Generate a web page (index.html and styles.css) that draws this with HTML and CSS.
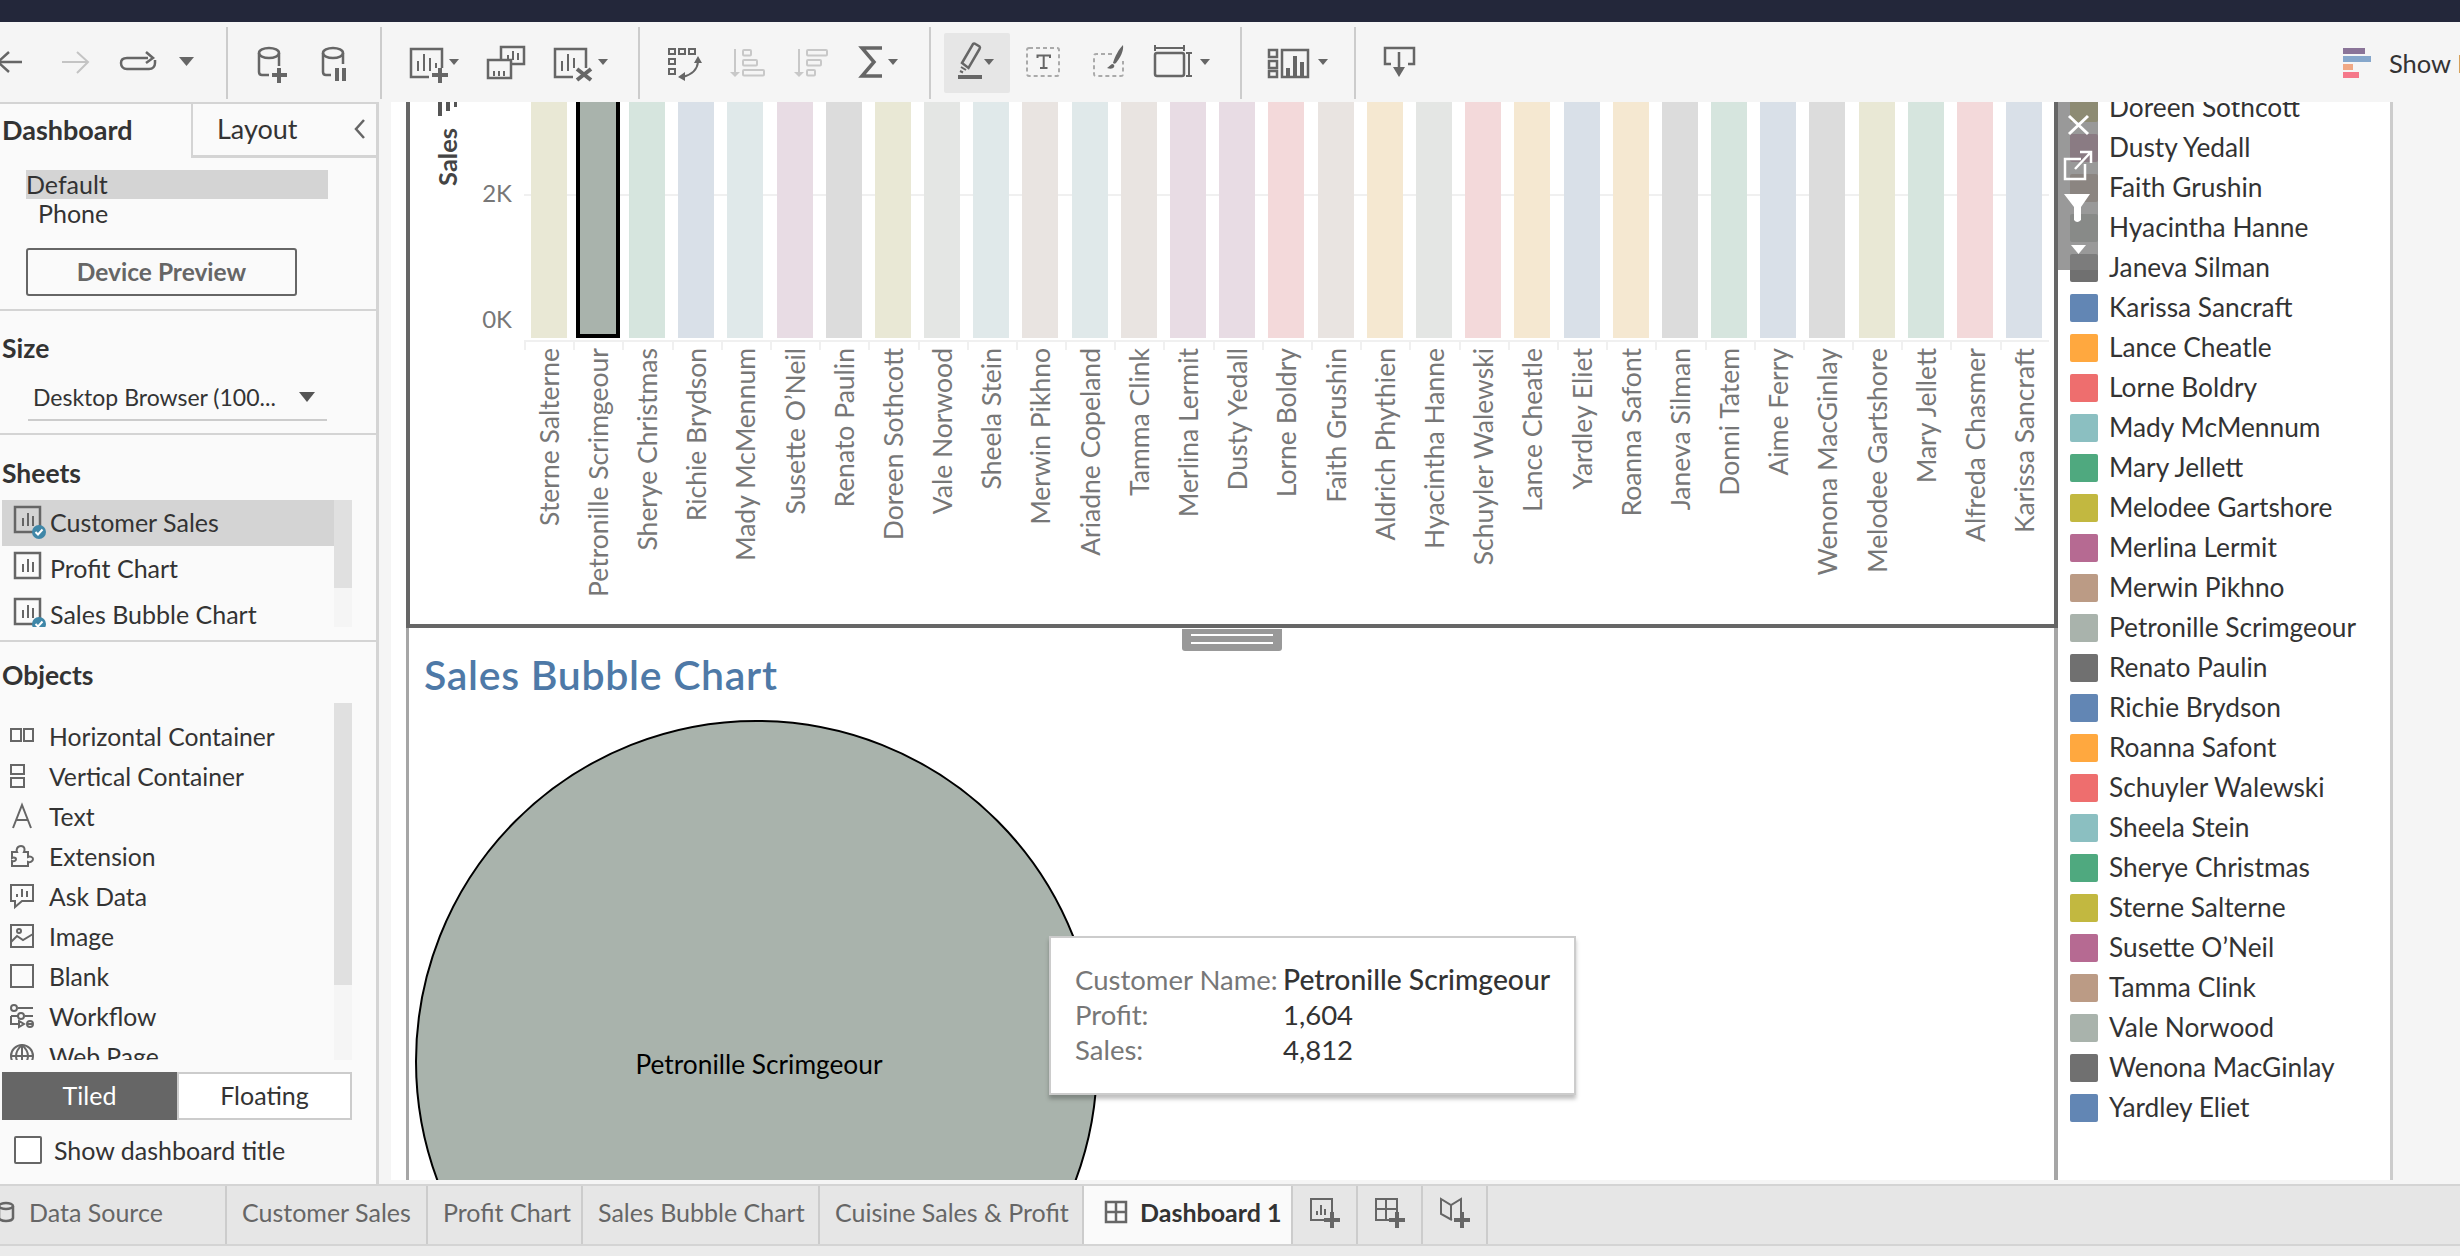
FILE: index.html
```html
<!doctype html>
<html>
<head>
  <title>Dashboard 1</title>
  <link rel="stylesheet" href="styles.css">
</head>
<body>
  <div class="titlebar"></div>

  <div class="toolbar">
    <div class="tb-group g1">
      <svg width="226" height="72" viewBox="0 27 226 72" class="ico">
        <path d="M-2 62H22M9 52L-2 62L9 72"/>
        <path class="off" d="M62 62H87M77 52L88 62L77 73"/>
        <path d="M148 58h-21c-4 0-6 2-6 5s2 6 6 6h22c4 0 6-3 6-6v-3M146 52l7 6-7 5"/>
        <path class="fill" d="M179 57h15l-7.500 9z"/>
      </svg>
    </div>
    <div class="tb-group g2">
      <svg width="152" height="72" viewBox="228 27 152 72" class="ico">
        <ellipse cx="269" cy="53" rx="10" ry="5"/>
        <path d="M259 53v19q0 3 3 3h7M279 53v13"/>
        <path class="thick" d="M279 68v15M272 75h15"/>
        <ellipse cx="333" cy="53" rx="10" ry="5"/>
        <path d="M323 53v19q0 3 3 3h5M343 53v11"/>
        <path class="thick" d="M337 68v13M344 68v13"/>
      </svg>
    </div>
    <div class="tb-group g3">
      <svg width="256" height="72" viewBox="382 27 256 72" class="ico">
        <path d="M429 77h-18V49h31v19"/>
        <path class="thin" d="M418 71V61M424 71V54M430 71V58M436 68V63"/>
        <path class="thick" d="M440 68v15M432 75h16"/>
        <path class="fill" d="M449 59h10l-5 6z"/>
        <path d="M501 60V47h23v17h-13M488 60h23v18h-23z"/>
        <path class="thin" d="M508 60v-5M513 60v-9M518 60v-7M494 76v-5M499 76v-5M504 76v-5"/>
        <path d="M573 77h-18V49h31v19"/>
        <path class="thin" d="M562 71V61M568 71V54M574 68V58"/>
        <path class="thick" d="M577 69l14 11M591 69l-14 11"/>
        <path class="fill" d="M598 59h10l-5 6z"/>
      </svg>
    </div>
    <div class="tb-group g4">
      <svg width="289" height="72" viewBox="640 27 289 72" class="ico">
        <path class="thin" d="M669 49h6v5h-6zM679 49h6v5h-6zM689 49h6v5h-6zM669 59h6v5h-6zM669 69h6v5h-6z"/>
        <path class="thin" d="M698 62q-1 11-15 15"/>
        <path class="fill" d="M698 56l4 7h-8zM678 77l7-5v9z"/>
        <g class="dim">
          <path d="M735 49v24"/>
          <path class="solid" d="M730 72h10l-5 5z"/>
          <rect x="743" y="50" width="8" height="5.500" rx="1"/>
          <rect x="743" y="60" width="14" height="5.500" rx="1"/>
          <rect x="743" y="70" width="21" height="5.500" rx="1"/>
          <path d="M799 49v24"/>
          <path class="solid" d="M794 72h10l-5 5z"/>
          <rect x="807" y="50" width="20" height="5.500" rx="1"/>
          <rect x="807" y="60" width="14" height="5.500" rx="1"/>
          <rect x="807" y="70" width="8" height="5.500" rx="1"/>
        </g>
        <path class="heavy" d="M882 48h-20l12 14-12 14h20"/>
        <path class="fill" d="M888 59h10l-5 6z"/>
      </svg>
    </div>
    <div class="tb-group g5">
      <div class="tb-active"></div>
      <svg width="309" height="72" viewBox="931 27 309 72" class="ico">
        <path d="M962 63l11-19q1-1 2.500 0l4 2.500q1 1 0 2.500l-11 19z"/>
        <path class="thin" d="M961 67l5 3M960 71l3 1.500"/>
        <path class="pen-line" d="M959 76h22v2h-22z"/>
        <path class="fill" d="M984 59h10l-5 6z"/>
        <rect class="dashed" x="1027" y="48" width="32" height="28" rx="2"/>
        <path class="thin" d="M1037.500 58v-2.500h12.500v2.500M1043.700 55.500v12.500M1040 68h7.500"/>
        <path class="dashed" d="M1112 54h-16q-2 0-2 2v18q0 2 2 2h25q2 0 2-2v-13"/>
        <path class="fill" d="M1123 45c1 6-3 13-7 18-1 1-2 1-3 0 2-7 6-14 10-18zM1112 64c2 0 3 2 2 3-1 2-4 2-7 1 2-1 3-3 5-4z"/>
        <rect x="1155" y="53" width="29" height="23" rx="2"/>
        <path class="thin" d="M1155 48h29M1155 45v6M1184 45v6M1189 53v23M1186 53h6M1186 76h6"/>
        <path class="fill" d="M1200 59h10l-5 6z"/>
      </svg>
    </div>
    <div class="tb-group g6">
      <svg width="112" height="72" viewBox="1242 27 112 72" class="ico">
        <path d="M1269 50h8v7h-8zM1269 61h8v7h-8zM1269 71h8v6h-8zM1282 50h26v27h-26z"/>
        <path class="thick" d="M1288 77V68M1295 77V56M1302 77V62"/>
        <path class="fill" d="M1318 59h10l-5 6z"/>
      </svg>
    </div>
    <div class="tb-group g7">
      <svg width="90" height="72" viewBox="1356 27 90 72" class="ico">
        <path d="M1391 64h-6V48h29v16h-6M1399 52v18"/>
        <path class="fill" d="M1393 67h12l-6 10z"/>
      </svg>
    </div>
    <div class="show-me">
      <div class="show-me-icon">
        <i class="sm a"></i><i class="sm b"></i><i class="sm c"></i><i class="sm d"></i>
      </div>
      <span>Show Me</span>
    </div>
  </div>

  <div class="main">
    <aside class="side">
      <div class="side-tabs">
        <div class="side-tab on">Dashboard</div>
        <div class="side-tab">Layout
          <svg width="12" height="22" viewBox="0 0 12 22" class="ico"><path d="M10 2L2 11l8 9"/></svg>
        </div>
      </div>

      <section class="device">
        <div class="device-row picked">Default</div>
        <div class="device-row phone">Phone</div>
        <div class="device-btn">Device Preview</div>
      </section>

      <section class="size">
        <h3>Size</h3>
        <div class="size-select">
          <span>Desktop Browser (100...</span>
          <svg width="16" height="10" viewBox="0 0 16 10"><path d="M0 0h16l-8 10z" fill="#555"/></svg>
        </div>
      </section>

      <section class="sheets">
        <h3>Sheets</h3>
        <div class="scroll-list sheet-list">
          <div class="rows">
            <div class="sheet-row picked">
              <svg width="30" height="32" viewBox="0 0 30 32" class="ico">
                <path d="M1 1h25v25H1z"/><path class="thin" d="M9 20v-8M14 20V7M19 20v-10"/>
                <circle class="badge" cx="25" cy="26" r="7"/><path class="tick" d="M21.500 26l2.500 2.500 4.500-5"/>
              </svg>
              Customer Sales
            </div>
            <div class="sheet-row">
              <svg width="30" height="32" viewBox="0 0 30 32" class="ico">
                <path d="M1 1h25v25H1z"/><path class="thin" d="M9 20v-8M14 20V7M19 20v-10"/>
              </svg>
              Profit Chart
            </div>
            <div class="sheet-row">
              <svg width="30" height="32" viewBox="0 0 30 32" class="ico">
                <path d="M1 1h25v25H1z"/><path class="thin" d="M9 20v-8M14 20V7M19 20v-10"/>
                <circle class="badge" cx="25" cy="26" r="7"/><path class="tick" d="M21.500 26l2.500 2.500 4.500-5"/>
              </svg>
              Sales Bubble Chart
            </div>
          </div>
          <div class="scrollbar sheets-bar"><div class="thumb"></div></div>
        </div>
      </section>

      <section class="objects">
        <h3>Objects</h3>
        <div class="scroll-list object-list">
          <div class="rows">
            <div class="obj-row">
              <svg width="24" height="24" viewBox="0 0 24 24" class="ico"><path class="thin" d="M1 5h10v12H1zM14 5h9v12h-9z"/></svg>
              Horizontal Container
            </div>
            <div class="obj-row">
              <svg width="24" height="24" viewBox="0 0 24 24" class="ico"><path class="thin" d="M1 1h13v9H1zM1 14h13v9H1z"/></svg>
              Vertical Container
            </div>
            <div class="obj-row">
              <svg width="24" height="24" viewBox="0 0 24 24" class="ico"><path class="thin" d="M3 24L12 1l9 23M6 16h12"/></svg>
              Text
            </div>
            <div class="obj-row">
              <svg width="24" height="24" viewBox="0 0 24 24" class="ico"><path class="thin" d="M2 8h5c-1-2 0-6 4-6s4 4 3 6h4v5c2-1 5 0 5 2s-3 4-5 3v4H2v-5c3 1 4-1 4-2s-2-2-4-1z"/></svg>
              Extension
            </div>
            <div class="obj-row">
              <svg width="24" height="24" viewBox="0 0 24 24" class="ico"><path class="thin" d="M1 1h22v16H12l-7 6v-6H1zM7 13v-3M12 13V5M17 13V7"/></svg>
              Ask Data
            </div>
            <div class="obj-row">
              <svg width="24" height="24" viewBox="0 0 24 24" class="ico"><path class="thin" d="M1 1h22v22H1zM1 18l6-6 6 4 10-6"/><circle class="thin" cx="9" cy="7" r="2"/></svg>
              Image
            </div>
            <div class="obj-row">
              <svg width="24" height="24" viewBox="0 0 24 24" class="ico"><path class="thin" d="M1 1h22v22H1z"/></svg>
              Blank
            </div>
            <div class="obj-row">
              <svg width="24" height="24" viewBox="0 0 24 24" class="ico"><path class="thin" d="M8 4h15M1 12h7M15 12h8M1 12v8h8M9 17v6l5-3zM18 20h5"/><circle class="thin" cx="4" cy="4" r="3"/><circle class="thin" cx="11" cy="12" r="3"/><circle class="thin" cx="20" cy="20" r="3"/></svg>
              Workflow
            </div>
            <div class="obj-row">
              <svg width="24" height="24" viewBox="0 0 24 24" class="ico"><circle class="thin" cx="12" cy="12" r="11"/><path class="thin" d="M1 12h22M12 1v22M12 1c-8 7-8 15 0 22M12 1c8 7 8 15 0 22"/></svg>
              Web Page
            </div>
          </div>
          <div class="scrollbar objects-bar"><div class="thumb"></div></div>
        </div>
        <div class="mode">
          <div class="mode-btn on">Tiled</div>
          <div class="mode-btn">Floating</div>
        </div>
        <label class="show-title"><span class="check"></span>Show dashboard title</label>
      </section>
    </aside>

    <div class="dashboard">
      <div class="sheet-stack">
        <div class="top-sheet">
          <div class="yaxis">
            <div class="axis-title">
              <span class="axis-name">Sales</span>
              <svg width="22" height="14" viewBox="0 0 22 14" class="axis-sort"><path d="M2 0h4v14H2zM10 0h4v9h-4zM18 0h3v5h-3z" fill="#555"/></svg>
            </div>
            <div class="ticks"><span>2K</span><span>0K</span></div>
          </div>
          <div class="cols">
            <div class="col t-olive"><div class="bar"></div><div class="lab">Sterne Salterne</div></div>
            <div class="col t-sage"><div class="bar sel"></div><div class="lab">Petronille Scrimgeour</div></div>
            <div class="col t-green"><div class="bar"></div><div class="lab">Sherye Christmas</div></div>
            <div class="col t-blue"><div class="bar"></div><div class="lab">Richie Brydson</div></div>
            <div class="col t-teal"><div class="bar"></div><div class="lab">Mady McMennum</div></div>
            <div class="col t-plum"><div class="bar"></div><div class="lab">Susette O’Neil</div></div>
            <div class="col t-gray"><div class="bar"></div><div class="lab">Renato Paulin</div></div>
            <div class="col t-olive"><div class="bar"></div><div class="lab">Doreen Sothcott</div></div>
            <div class="col t-mist"><div class="bar"></div><div class="lab">Vale Norwood</div></div>
            <div class="col t-teal"><div class="bar"></div><div class="lab">Sheela Stein</div></div>
            <div class="col t-brown"><div class="bar"></div><div class="lab">Merwin Pikhno</div></div>
            <div class="col t-teal"><div class="bar"></div><div class="lab">Ariadne Copeland</div></div>
            <div class="col t-brown"><div class="bar"></div><div class="lab">Tamma Clink</div></div>
            <div class="col t-plum"><div class="bar"></div><div class="lab">Merlina Lermit</div></div>
            <div class="col t-plum"><div class="bar"></div><div class="lab">Dusty Yedall</div></div>
            <div class="col t-red"><div class="bar"></div><div class="lab">Lorne Boldry</div></div>
            <div class="col t-brown"><div class="bar"></div><div class="lab">Faith Grushin</div></div>
            <div class="col t-orange"><div class="bar"></div><div class="lab">Aldrich Phythien</div></div>
            <div class="col t-mist"><div class="bar"></div><div class="lab">Hyacintha Hanne</div></div>
            <div class="col t-red"><div class="bar"></div><div class="lab">Schuyler Walewski</div></div>
            <div class="col t-orange"><div class="bar"></div><div class="lab">Lance Cheatle</div></div>
            <div class="col t-blue"><div class="bar"></div><div class="lab">Yardley Eliet</div></div>
            <div class="col t-orange"><div class="bar"></div><div class="lab">Roanna Safont</div></div>
            <div class="col t-gray"><div class="bar"></div><div class="lab">Janeva Silman</div></div>
            <div class="col t-green"><div class="bar"></div><div class="lab">Donni Tatem</div></div>
            <div class="col t-blue"><div class="bar"></div><div class="lab">Aime Ferry</div></div>
            <div class="col t-gray"><div class="bar"></div><div class="lab">Wenona MacGinlay</div></div>
            <div class="col t-olive"><div class="bar"></div><div class="lab">Melodee Gartshore</div></div>
            <div class="col t-green"><div class="bar"></div><div class="lab">Mary Jellett</div></div>
            <div class="col t-red"><div class="bar"></div><div class="lab">Alfreda Chasmer</div></div>
            <div class="col t-blue"><div class="bar"></div><div class="lab">Karissa Sancraft</div></div>
          </div>
        </div>

        <div class="bottom-sheet">
          <div class="handle"></div>
          <h2 class="sheet-title">Sales Bubble Chart</h2>
          <div class="bubble"><span>Petronille Scrimgeour</span></div>
          <div class="tooltip">
            <div class="tip-row"><span class="tip-key">Customer Name:</span><span class="tip-val strong">Petronille Scrimgeour</span></div>
            <div class="tip-row"><span class="tip-key">Profit:</span><span class="tip-val">1,604</span></div>
            <div class="tip-row"><span class="tip-key">Sales:</span><span class="tip-val">4,812</span></div>
          </div>
        </div>
      </div>

      <div class="legend">
        <div class="legend-list">
          <div class="key k-olive"><i></i>Doreen Sothcott</div>
          <div class="key k-plum"><i></i>Dusty Yedall</div>
          <div class="key k-brown"><i></i>Faith Grushin</div>
          <div class="key k-sage"><i></i>Hyacintha Hanne</div>
          <div class="key k-gray"><i></i>Janeva Silman</div>
          <div class="key k-blue"><i></i>Karissa Sancraft</div>
          <div class="key k-orange"><i></i>Lance Cheatle</div>
          <div class="key k-red"><i></i>Lorne Boldry</div>
          <div class="key k-teal"><i></i>Mady McMennum</div>
          <div class="key k-green"><i></i>Mary Jellett</div>
          <div class="key k-olive"><i></i>Melodee Gartshore</div>
          <div class="key k-plum"><i></i>Merlina Lermit</div>
          <div class="key k-brown"><i></i>Merwin Pikhno</div>
          <div class="key k-sage"><i></i>Petronille Scrimgeour</div>
          <div class="key k-gray"><i></i>Renato Paulin</div>
          <div class="key k-blue"><i></i>Richie Brydson</div>
          <div class="key k-orange"><i></i>Roanna Safont</div>
          <div class="key k-red"><i></i>Schuyler Walewski</div>
          <div class="key k-teal"><i></i>Sheela Stein</div>
          <div class="key k-green"><i></i>Sherye Christmas</div>
          <div class="key k-olive"><i></i>Sterne Salterne</div>
          <div class="key k-plum"><i></i>Susette O’Neil</div>
          <div class="key k-brown"><i></i>Tamma Clink</div>
          <div class="key k-sage"><i></i>Vale Norwood</div>
          <div class="key k-gray"><i></i>Wenona MacGinlay</div>
          <div class="key k-blue"><i></i>Yardley Eliet</div>
        </div>
        <div class="float-tools">
          <svg width="40" height="168" viewBox="0 0 40 168">
            <path d="M11 14l19 18M30 14L11 32" stroke="#fff" stroke-width="3" fill="none"/>
            <path d="M23 57H7v20h20V62M17 67l15-16M22 50h11v11" stroke="#fff" stroke-width="2.500" fill="none"/>
            <path d="M6 92h26L23 105v13q-4 4-7 0v-13z" fill="#fff"/>
            <path d="M13 143h15l-7.500 9z" fill="#fff"/>
          </svg>
        </div>
      </div>
    </div>
  </div>

  <div class="tabs">
    <div class="tab w-source">
      <svg width="16" height="20" viewBox="0 0 16 20" class="ico"><ellipse cx="6" cy="4" rx="7" ry="3"/><path d="M-1 4v12q1 3 7 3t7-3V4"/></svg>
      Data Source
    </div>
    <div class="tab w-cust">Customer Sales</div>
    <div class="tab w-profit">Profit Chart</div>
    <div class="tab w-bubble">Sales Bubble Chart</div>
    <div class="tab w-cuisine">Cuisine Sales &amp; Profit</div>
    <div class="tab w-dash on">
      <svg width="22" height="22" viewBox="0 0 22 22" class="ico"><path d="M1 1h20v20H1zM11 1v20M1 11h20"/></svg>
      Dashboard 1
    </div>
    <div class="tab w-icon">
      <svg width="30" height="30" viewBox="0 0 30 30" class="ico"><path class="thin" d="M14 22H1V1h21v13"/><path class="thin" d="M7 17v-4M11 17V7M15 17v-6"/><path class="thick" d="M22 14v16M14 22h16"/></svg>
    </div>
    <div class="tab w-icon">
      <svg width="30" height="30" viewBox="0 0 30 30" class="ico"><path class="thin" d="M14 22H1V1h21v13M11 1v21M1 11h21"/><path class="thick" d="M22 14v16M14 22h16"/></svg>
    </div>
    <div class="tab w-icon">
      <svg width="30" height="30" viewBox="0 0 30 30" class="ico"><path class="thin" d="M12 22L1 16V1l10 6 10-6v13M11 7v15"/><path class="thick" d="M22 14v16M14 22h16"/></svg>
    </div>
  </div>
  <div class="status"></div>
</body>
</html>
```

FILE: styles.css
```css
body {
  background: #f5f5f5;
  color: #333;
  font-family: Lato, 'Liberation Sans', sans-serif;
  font-size: 25px;
  height: 1256px;
  margin: 0;
  overflow: hidden;
  width: 2460px;
}

h2, h3 {
  margin: 0;
}

h3 {
  font-size: 26.500px;
  font-weight: bold;
  line-height: 30px;
}

section {
  box-sizing: border-box;
}

.titlebar {
  background: #23273a;
  height: 22px;
}

/* Toolbar */
.toolbar {
  align-items: center;
  background: #f5f5f5;
  display: flex;
  height: 80px;
}

.tb-group {
  border-right: 2px solid #ccc;
  flex: none;
  height: 72px;
  margin-top: 2px;
  position: relative;
}

.g1 { width: 226px; }
.g2 { width: 152px; }
.g3 { width: 256px; }
.g4 { width: 289px; }
.g5 { width: 309px; }
.g6 { width: 112px; }
.g7 { border: 0; width: 90px; }

.tb-group svg {
  display: block;
  position: relative;
}

.tb-active {
  background: #e6e6e6;
  border-radius: 2px;
  height: 60px;
  left: 13px;
  position: absolute;
  top: 6px;
  width: 66px;
}

.ico {
  fill: none;
  flex: none;
  overflow: visible;
  stroke: #666;
  stroke-width: 2.5;
}

.ico .off { stroke: #c4c4c4; stroke-width: 2; }
.ico .fill { fill: #666; stroke: none; }
.ico .thin { stroke-width: 2; }
.ico .thick { stroke-width: 4; }
.ico .heavy { stroke-width: 3.5; }
.ico .pen-line { fill: #666; stroke-width: 2; }
.ico .dim path,
.ico .dim rect { stroke: #c8c8c8; stroke-width: 2; }
.ico .dim .solid { fill: #c8c8c8; stroke: none; }
.ico .dashed { stroke: #aaa; stroke-dasharray: 4 3; stroke-width: 2; }
.ico .badge { fill: #3f87a8; stroke: none; }
.ico .tick { stroke: #fff; stroke-width: 2; }

.show-me {
  align-items: center;
  display: flex;
  flex: none;
  font-size: 25.500px;
  gap: 18px;
  margin-left: 897px;
  margin-top: 2px;
}

.show-me-icon {
  display: flex;
  flex-direction: column;
  gap: 2px;
}

.sm {
  display: block;
  height: 6px;
}

.sm.a { background: #8a7498; width: 22px; }
.sm.b { background: #86a7cb; width: 28px; }
.sm.c { background: #f0a884; width: 10px; }
.sm.d { background: #f5788a; width: 16px; }

/* Layout */
.main {
  display: flex;
  height: 1082px;
}

/* Left pane */
.side {
  background: #fafafa;
  border-right: 3px solid #d4d4d4;
  border-top: 2px solid #d4d4d4;
  box-sizing: border-box;
  display: flex;
  flex: none;
  flex-direction: column;
  height: 1082px;
  width: 379px;
}

.side-tabs {
  display: flex;
  flex: none;
  font-size: 27px;
  height: 54px;
}

.side-tab {
  align-items: center;
  border-bottom: 3px solid #d4d4d4;
  border-left: 2px solid #d4d4d4;
  box-sizing: border-box;
  display: flex;
  flex: 1;
  justify-content: space-between;
  padding: 0 10px 2px 24px;
}

.side-tab.on {
  border: 0;
  flex: none;
  font-weight: bold;
  padding: 0 0 4px 2px;
  width: 191px;
}

.device {
  border-bottom: 2px solid #d4d4d4;
  flex: none;
  height: 153px;
  padding: 12px 0 0 26px;
}

.device-row {
  align-items: center;
  box-sizing: border-box;
  display: flex;
  height: 29px;
  padding-bottom: 2px;
  width: 302px;
}

.device-row.picked { background: #d4d4d4; }

.device-row.phone {
  height: 30px;
  padding-left: 12px;
}

.device-btn {
  align-items: center;
  border: 2px solid #666;
  border-radius: 3px;
  box-sizing: border-box;
  color: #666;
  display: flex;
  font-size: 24.500px;
  font-weight: bold;
  height: 48px;
  justify-content: center;
  margin-top: 19px;
  padding-bottom: 2px;
  width: 271px;
}

.size {
  border-bottom: 2px solid #d4d4d4;
  flex: none;
  height: 124px;
  padding: 22px 0 0 2px;
}

.size-select {
  align-items: center;
  border-bottom: 2px solid #ccc;
  box-sizing: border-box;
  display: flex;
  font-size: 23px;
  height: 47px;
  justify-content: space-between;
  margin: 11px 0 0 26px;
  padding: 0 12px 0 5px;
  width: 299px;
}

.sheets {
  border-bottom: 2px solid #d4d4d4;
  flex: none;
  height: 207px;
}

.sheets h3,
.objects h3 {
  padding-left: 2px;
}

.sheets h3 {
  padding-top: 23px;
}

.scroll-list {
  display: flex;
  margin-left: 2px;
  overflow: hidden;
  width: 350px;
}

.sheet-list {
  height: 127px;
  margin-top: 12px;
}

.rows {
  flex: none;
  width: 332px;
}

.sheet-row {
  align-items: center;
  box-sizing: border-box;
  display: flex;
  gap: 6px;
  height: 46px;
  padding: 0 0 2px 12px;
}

.sheet-row.picked { background: #d4d4d4; }

.scrollbar {
  background: #f5f5f5;
  flex: none;
  width: 18px;
}

.thumb {
  background: #e0e0e0;
}

.sheets-bar .thumb { height: 88px; }
.objects-bar .thumb { height: 282px; }

.objects {
  flex: 1;
}

.objects h3 {
  padding-top: 18px;
}

.object-list {
  height: 357px;
  margin-top: 13px;
}

.object-list .rows {
  padding-top: 13px;
}

.obj-row {
  align-items: center;
  display: flex;
  font-size: 24.700px;
  gap: 15px;
  height: 40px;
  padding-left: 8px;
}

.mode {
  display: flex;
  height: 48px;
  margin: 12px 0 0 2px;
  width: 350px;
}

.mode-btn {
  align-items: center;
  background: #fff;
  border: 2px solid #ccc;
  box-sizing: border-box;
  display: flex;
  flex: 1;
  justify-content: center;
  padding-bottom: 2px;
}

.mode-btn.on {
  background: #666;
  border-color: #666;
  color: #fff;
}

.show-title {
  align-items: center;
  display: flex;
  gap: 12px;
  line-height: 28px;
  margin: 16px 0 0 14px;
}

.check {
  background: #fff;
  border: 2px solid #666;
  border-radius: 2px;
  box-sizing: border-box;
  height: 28px;
  width: 28px;
}

/* Dashboard */
.dashboard {
  background: #fff;
  display: flex;
  flex: none;
  height: 1078px;
  margin-left: 12px;
  padding-left: 15px;
  width: 1987px;
}

.sheet-stack {
  display: flex;
  flex: none;
  flex-direction: column;
  width: 1652px;
}

.top-sheet {
  border-bottom: 4px solid #666;
  border-left: 4px solid #666;
  border-right: 4px solid #666;
  box-sizing: border-box;
  display: flex;
  flex: none;
  height: 526px;
  overflow: hidden;
}

.yaxis {
  display: flex;
  flex: none;
  width: 114px;
}

.axis-title {
  align-items: center;
  display: flex;
  flex: none;
  flex-direction: column;
  margin-left: 25px;
  width: 24px;
}

.axis-sort { order: -1; }

.axis-name {
  color: #444;
  font-size: 25.500px;
  font-weight: bold;
  margin-top: 12px;
  transform: rotate(180deg);
  writing-mode: vertical-rl;
}

.ticks {
  align-items: flex-end;
  color: #777;
  display: flex;
  flex: 1;
  flex-direction: column;
  font-size: 24px;
  gap: 96px;
  padding: 76px 12px 0 0;
}

.ticks span {
  line-height: 30px;
}

.cols {
  background: linear-gradient(#f0f0f0, #f0f0f0) 0 92px / 100% 2px no-repeat;
  display: flex;
  flex: none;
  width: 1525.200px;
}

.col {
  align-items: center;
  background:
    linear-gradient(#f0f0f0, #f0f0f0) 0 238px / 2px 10px no-repeat,
    linear-gradient(#f0f0f0, #f0f0f0) 0 238px / 100% 2px no-repeat;
  display: flex;
  flex: none;
  flex-direction: column;
  width: 49.200px;
}

.bar {
  background: var(--tone);
  flex: none;
  height: 236px;
  width: 36px;
}

.bar.sel {
  border: 4px solid #000;
  border-top: 0;
  box-sizing: border-box;
  width: 44px;
}

.lab {
  color: #777;
  font-size: 26.500px;
  line-height: 30px;
  margin-top: 10px;
  transform: rotate(180deg);
  white-space: nowrap;
  writing-mode: vertical-rl;
}

.t-olive { --tone: #e9e8d5; }
.t-sage { --tone: #a9b3ac; }
.t-green { --tone: #d6e5de; }
.t-blue { --tone: #d9e0e8; }
.t-teal { --tone: #e0e9ea; }
.t-plum { --tone: #e8dce4; }
.t-gray { --tone: #dcdcdc; }
.t-mist { --tone: #e4e6e4; }
.t-brown { --tone: #e9e4e1; }
.t-red { --tone: #f3d9da; }
.t-orange { --tone: #f5e8d1; }

.bottom-sheet {
  border-left: 3px solid #a6a6a6;
  border-right: 4px solid #a6a6a6;
  box-sizing: border-box;
  flex: 1;
  overflow: hidden;
  position: relative;
}

.handle {
  background: #999;
  border-radius: 0 0 3px 3px;
  box-sizing: border-box;
  height: 22px;
  left: 773px;
  padding: 5px 9px 0;
  position: absolute;
  top: 1px;
  width: 100px;
}

.handle::before {
  border-bottom: 2px solid #fff;
  border-top: 2px solid #fff;
  content: '';
  display: block;
  height: 6px;
}

.sheet-title {
  color: #4e79a7;
  font-size: 41px;
  font-weight: 600;
  letter-spacing: .7px;
  line-height: 46px;
  padding: 24px 0 0 15px;
}

.bubble {
  align-items: center;
  background: #a9b3ac;
  border: 2px solid #000;
  border-radius: 50%;
  box-sizing: border-box;
  color: #000;
  display: flex;
  font-size: 26.300px;
  height: 683px;
  justify-content: center;
  left: 6px;
  padding: 4px 0 0 5px;
  position: absolute;
  top: 92px;
  width: 683px;
}

.tooltip {
  background: #fff;
  border: 2px solid #ccc;
  box-shadow: 0 4px 4px rgba(0, 0, 0, .25);
  box-sizing: border-box;
  font-size: 27.500px;
  height: 159px;
  left: 640px;
  padding: 24px 0 0 24px;
  position: absolute;
  top: 308px;
  width: 527px;
}

.tip-row {
  display: flex;
  line-height: 35px;
}

.tip-key {
  color: #777;
  width: 208px;
}

.tip-val { color: #333; }
.tip-val.strong { font-size: 28.300px; font-weight: 500; }

/* Legend */
.legend {
  border-right: 3px solid #ccc;
  box-sizing: border-box;
  flex: none;
  font-size: 26.300px;
  overflow: hidden;
  padding-left: 12px;
  position: relative;
  width: 335px;
}

.legend-list {
  margin-top: -14px;
}

.key {
  align-items: center;
  box-sizing: border-box;
  display: flex;
  gap: 11px;
  height: 40px;
  padding-bottom: 2px;
  white-space: nowrap;
}

.key i {
  background: var(--swatch);
  border-radius: 2px;
  flex: none;
  height: 28px;
  margin-top: 2px;
  width: 28px;
}

.k-blue { --swatch: #6286b4; }
.k-orange { --swatch: #ffa83f; }
.k-red { --swatch: #ee6e6e; }
.k-teal { --swatch: #8bbfc1; }
.k-green { --swatch: #4fa97f; }
.k-olive { --swatch: #c2b840; }
.k-plum { --swatch: #b66a92; }
.k-brown { --swatch: #bb9b85; }
.k-sage { --swatch: #a9b3ac; }
.k-gray { --swatch: #707070; }

.float-tools {
  background: rgba(128, 128, 128, .8);
  height: 168px;
  left: 0;
  position: absolute;
  top: 0;
  width: 40px;
}

/* Tabs */
.tabs {
  background: #e6e6e6;
  border-bottom: 2px solid #d4d4d4;
  border-top: 2px solid #d4d4d4;
  color: #666;
  display: flex;
  height: 58px;
}

.tab {
  align-items: center;
  border-right: 2px solid #ccc;
  box-sizing: border-box;
  display: flex;
  flex: none;
  gap: 13px;
  padding: 0 0 7px 15px;
}

.tab.on {
  background: #fafafa;
  color: #333;
  font-weight: bold;
}

.w-source { padding-left: 0; width: 227px; }
.w-cust { width: 201px; }
.w-profit { width: 155px; }
.w-bubble { width: 237px; }
.w-cuisine { width: 264px; }
.w-dash { padding-left: 21px; width: 209px; }
.w-icon { justify-content: center; padding: 0 0 4px; width: 65px; }

.status {
  background: #ebebeb;
  height: 10px;
}
```
